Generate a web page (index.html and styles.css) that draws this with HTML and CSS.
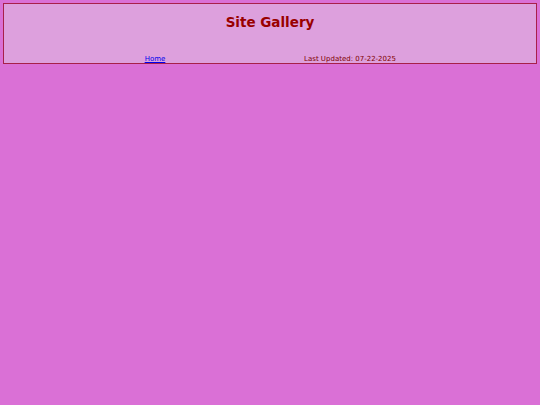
FILE: index.html
```html
<!DOCTYPE html>
<html>
<head>
<meta charset="utf-8">
<link rel="stylesheet" href="styles.css">
</head>
<body>
<div class="header">
  <h1 class="title">Site Gallery</h1>
  <div class="info">
    <div class="cell home"><a href="#">Home</a></div>
    <div class="cell updated">Last Updated: 07-22-2025</div>
  </div>
</div>
</body>
</html>
```
FILE: styles.css
```css
html, body {
  margin: 0;
  padding: 0;
}
body {
  background: #da70d6;
  padding: 3px;
  font-family: "DejaVu Sans", sans-serif;
}
.header {
  background: #dda0dd;
  border: 1px solid #a8204a;
  height: 59px;
  box-sizing: content-box;
  display: flex;
  flex-direction: column;
}
.title {
  margin: 10px 0 0 0;
  text-align: center;
  font-size: 13.5px;
  line-height: 17px;
  font-weight: bold;
  color: #990000;
}
.info {
  margin-top: auto;
  display: flex;
  padding-left: 36px;
  font-size: 7px;
  line-height: 6px;
  padding-bottom: 1px;
}
.cell {
  text-align: center;
}
.home {
  width: 230px;
}
.updated {
  width: 160px;
  color: #800000;
}
.home a {
  color: #0000ee;
}
```
